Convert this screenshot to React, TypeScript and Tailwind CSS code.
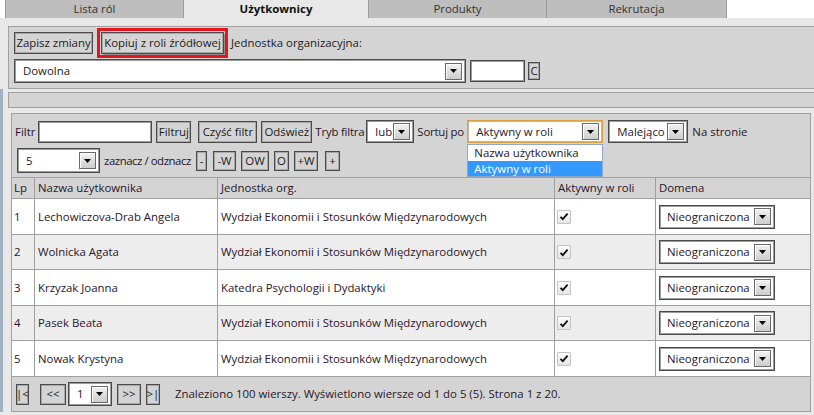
import React from 'react';

const rows = [
  { lp: 1, name: 'Lechowiczova-Drab Angela', unit: 'Wydział Ekonomii i Stosunków Międzynarodowych' },
  { lp: 2, name: 'Wolnicka Agata', unit: 'Wydział Ekonomii i Stosunków Międzynarodowych' },
  { lp: 3, name: 'Krzyzak Joanna', unit: 'Katedra Psychologii i Dydaktyki' },
  { lp: 4, name: 'Pasek Beata', unit: 'Wydział Ekonomii i Stosunków Międzynarodowych' },
  { lp: 5, name: 'Nowak Krystyna', unit: 'Wydział Ekonomii i Stosunków Międzynarodowych' },
];

const DropArrow = () => (
  <span className="flex h-[17px] w-[17px] shrink-0 items-center justify-center border border-[#6a6a6a] bg-gradient-to-b from-[#f2f2f2] to-[#cdcdcd] shadow-[inset_1px_1px_0_#ffffff]">
    <svg width="7" height="4" viewBox="0 0 7 4">
      <path d="M0 0h7L3.5 4z" fill="#000" />
    </svg>
  </span>
);

const Btn = ({ children, className = '' }: { children: React.ReactNode; className?: string }) => (
  <span
    className={`flex shrink-0 items-center justify-center border border-[#4a4a4a] bg-[#d4d4d4] leading-none text-[#1a1a1a] shadow-[inset_0_0_0_1px_#a8a8a8] ${className}`}
  >
    {children}
  </span>
);

const Select = ({ children, className = '' }: { children: React.ReactNode; className?: string }) => (
  <span
    className={`flex shrink-0 items-center justify-between border border-[#4a4a4a] bg-white pr-[3px] shadow-[inset_0_0_0_1px_#9c9c9c] ${className}`}
  >
    <span>{children}</span>
    <DropArrow />
  </span>
);

const Check = () => (
  <span className="flex h-[14px] w-[14px] items-center justify-center rounded-[1px] border border-[#c4c4c4] bg-gradient-to-b from-[#fbfbfb] to-[#e6e6e6]">
    <svg width="10" height="9" viewBox="0 0 10 9">
      <path d="M1.5 4.8 3.8 7.2 8.6 1.6" fill="none" stroke="#111" strokeWidth="1.8" />
    </svg>
  </span>
);

export default function App() {
  return (
    <div className="h-[415px] w-[814px] overflow-hidden whitespace-nowrap bg-white font-['Open_Sans',sans-serif] text-[11.4px] text-[#2a1428]">
      {/* tabs */}
      <div className="flex h-[18px] pl-[5px] text-[#333]">
        <div className="flex w-[179px] items-center justify-center border-x border-[#9c9c9c] bg-[#bebebe]">Lista ról</div>
        <div className="flex w-[184px] items-center justify-center bg-[#e8e8e8] font-bold text-[#111]">Użytkownicy</div>
        <div className="flex w-[179px] items-center justify-center border-x border-[#9c9c9c] bg-[#bebebe]">Produkty</div>
        <div className="flex w-[180px] items-center justify-center border-r border-[#9c9c9c] bg-[#bebebe]">Rekrutacja</div>
      </div>

      <div className="h-[397px] bg-[#e8e8e8] pt-[8px]">
        {/* top panel */}
        <div className="ml-[8px] border border-r-0 border-[#a0a0a0] bg-[#d4d4d4] px-[5px] pb-[5px] pt-[5px]">
          <div className="flex h-[22px] items-center">
            <Btn className="h-[22px] w-[79px]">Zapisz zmiany</Btn>
            <span className="ml-[8px] shadow-[2px_2px_2px_rgba(0,0,0,0.35)] outline outline-[3px] outline-offset-[1px] outline-[#e3161c]">
              <Btn className="h-[22px] w-[123px]">Kopiuj z roli źródłowej</Btn>
            </span>
            <span className="ml-[7px] text-[#1a1a1a]">Jednostka organizacyjna:</span>
          </div>
          <div className="mt-[5px] flex h-[24px] items-center">
            <Select className="h-[24px] w-[452px] pl-[8px] text-[#1a1a1a]">Dowolna</Select>
            <span className="ml-[4px] h-[22px] w-[55px] border border-[#4a4a4a] bg-white shadow-[inset_0_0_0_1px_#9c9c9c]" />
            <Btn className="ml-[3px] h-[18px] w-[12px]">C</Btn>
          </div>
        </div>

        {/* lower area with the left window edge */}
        <div className="border-l-[3px] border-[#a3b2c2] pl-[5px]">
          <div className="h-[3px]" />
          {/* bar */}
          <div className="h-[16px] border border-r-0 border-[#a0a0a0] bg-[#d4d4d4]" />

          {/* filter panel */}
          <div className="ml-[3px] mt-[5px] w-[800px] border border-[#a0a0a0] bg-[#d4d4d4]">
            <div className="mt-[6px] flex h-[23px] items-center pl-[3px]">
              <span>Filtr</span>
              <span className="ml-[3px] h-[22px] w-[114px] border border-[#4a4a4a] bg-white shadow-[inset_0_0_0_1px_#9c9c9c]" />
              <Btn className="ml-[4px] h-[22px] w-[35px]">Filtruj</Btn>
              <Btn className="ml-[7px] h-[22px] w-[59px]">Czyść filtr</Btn>
              <Btn className="ml-[4px] h-[22px] w-[51px]">Odśwież</Btn>
              <span className="ml-[3px] w-[48px] shrink-0 tracking-[-0.2px]">Tryb filtra</span>
              <Select className="ml-[3px] h-[23px] w-[48px] pl-[8px]">lub</Select>
              <span className="ml-[3px] w-[46px] shrink-0 tracking-[-0.2px]">Sortuj po</span>
              <span className="relative ml-[4px] shrink-0">
                <span className="flex h-[23px] w-[136px] items-center justify-between border border-[#d9a23e] bg-white pl-[8px] pr-[3px] shadow-[inset_0_0_0_1px_#c9b88e]">
                  <span>Aktywny w roli</span>
                  <DropArrow />
                </span>
                <span className="absolute left-0 top-[24px] z-10 flex w-[136px] flex-col border border-[#8fa7c8] bg-white">
                  <span className="h-[16px] pl-[6px] leading-[16px]">Nazwa użytkownika</span>
                  <span className="h-[15px] bg-[#3399ff] pl-[6px] leading-[15px] text-white">Aktywny w roli</span>
                </span>
              </span>
              <Select className="ml-[5px] h-[23px] w-[80px] pl-[8px]">Malejąco</Select>
              <span className="ml-[4px]">Na stronie</span>
            </div>

            <div className="mt-[5px] flex h-[25px] items-center pl-[5px]">
              <Select className="h-[25px] w-[83px] pl-[8px]">5</Select>
              <span className="ml-[4px] w-[92px] shrink-0 tracking-[-0.45px]">zaznacz / odznacz</span>
              <Btn className="ml-[0px] h-[20px] w-[11px]">-</Btn>
              <Btn className="ml-[6px] h-[20px] w-[23px]">-W</Btn>
              <Btn className="ml-[5px] h-[20px] w-[28px]">OW</Btn>
              <Btn className="ml-[5px] h-[20px] w-[15px]">O</Btn>
              <Btn className="ml-[5px] h-[20px] w-[24px]">+W</Btn>
              <Btn className="ml-[7px] h-[20px] w-[15px]">+</Btn>
            </div>

            {/* table */}
            <div className="mt-[4px] border-t border-[#a0a0a0]">
              <div className="grid h-[20px] grid-cols-[23px_183px_337px_101px_1fr]">
                <div className="flex items-center border-r border-[#a0a0a0] pl-[2px]">Lp</div>
                <div className="flex items-center border-r border-[#a0a0a0] pl-[3px]">Nazwa użytkownika</div>
                <div className="flex items-center border-r border-[#a0a0a0] pl-[3px]">Jednostka org.</div>
                <div className="flex items-center border-r border-[#a0a0a0] pl-[3px]">Aktywny w roli</div>
                <div className="flex items-center pl-[3px]">Domena</div>
              </div>
              {rows.map((r, i) => (
                <div
                  key={r.lp}
                  className={`grid grid-cols-[23px_183px_337px_101px_1fr] border-t border-[#a0a0a0] ${i % 2 ? 'h-[35px] bg-[#ededed]' : 'h-[36px] bg-white'}`}
                >
                  <div className="flex items-center border-r border-[#a0a0a0] pl-[2px]">{r.lp}</div>
                  <div className="flex items-center border-r border-[#a0a0a0] pl-[3px]">{r.name}</div>
                  <div className="flex items-center border-r border-[#a0a0a0] pl-[3px]">{r.unit}</div>
                  <div className="flex items-center border-r border-[#a0a0a0] pl-[2px]">
                    <Check />
                  </div>
                  <div className="flex items-center pl-[3px]">
                    <Select className="h-[24px] w-[116px] pl-[7px]">Nieograniczona</Select>
                  </div>
                </div>
              ))}
            </div>

            {/* pager */}
            <div className="flex h-[35px] items-center border-t border-[#a0a0a0] pl-[4px]">
              <Btn className="h-[21px] w-[13px]">|&lt;</Btn>
              <Btn className="ml-[11px] h-[21px] w-[26px]">&lt;&lt;</Btn>
              <Select className="ml-[2px] h-[24px] w-[44px] pl-[8px]">1</Select>
              <Btn className="ml-[5px] h-[21px] w-[24px]">&gt;&gt;</Btn>
              <Btn className="ml-[5px] h-[21px] w-[14px]">&gt;|</Btn>
              <span className="ml-[15px]">Znaleziono 100 wierszy. Wyświetlono wiersze od 1 do 5 (5). Strona 1 z 20.</span>
            </div>
          </div>
        </div>
      </div>
    </div>
  );
}
